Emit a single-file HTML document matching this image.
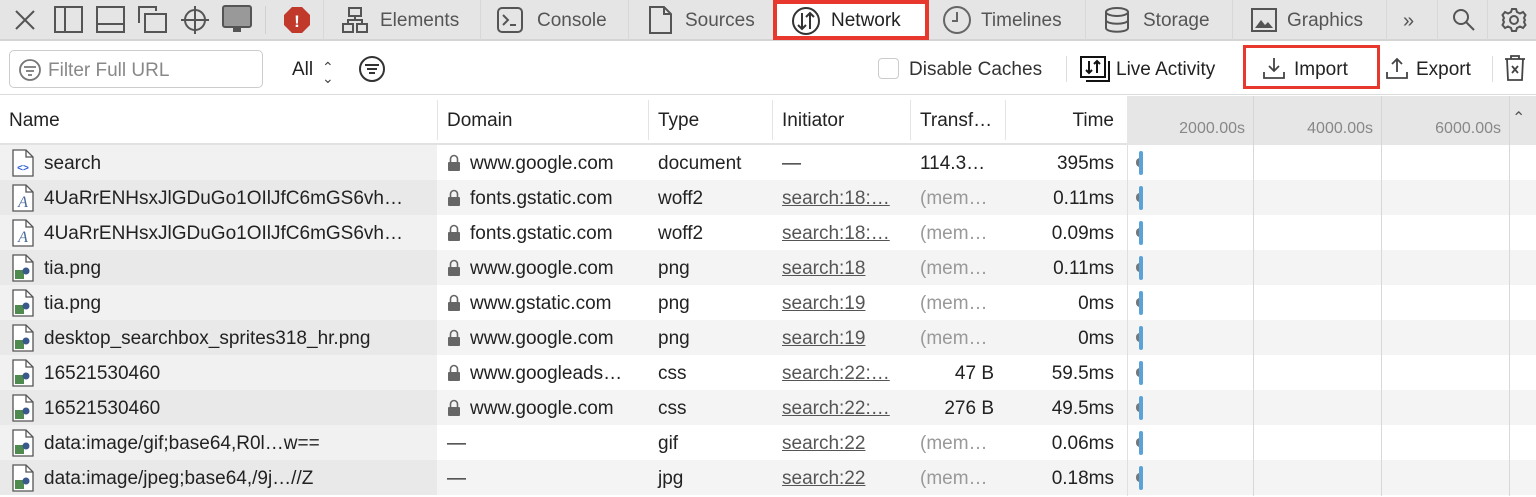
<!DOCTYPE html>
<html><head><meta charset="utf-8"><style>
*{box-sizing:border-box;margin:0;padding:0}
body{width:1536px;height:496px;overflow:hidden;background:#fff;font-family:"Liberation Sans",sans-serif;color:#222;position:relative}
.a{position:absolute}
.tabbar{left:0;top:0;width:1536px;height:41px;background:#e5e5e5;border-bottom:2px solid #d4d4d4}
.tab{position:absolute;top:0;height:40px;font-size:19px;color:#555;line-height:42px;border-left:1px solid #d8d8d8}
.tb{position:absolute;top:43px;height:52px;left:0;width:1536px;background:#fff;border-bottom:1px solid #dcdcdc}
.t{font-size:19px;line-height:37px;white-space:nowrap;position:absolute}
svg{position:absolute}
</style></head><body>
<div class="a tabbar"></div>
<svg style="left:12px;top:7px" width="26" height="26" viewBox="0 0 26 26" stroke="#555" stroke-width="2" fill="none"><path d="M4 4L22 22M22 4L4 22"/></svg>
<svg style="left:54px;top:6px" width="30" height="28" stroke="#555" stroke-width="2" fill="none"><rect x="1" y="1" width="27" height="25"/><path d="M11 1V26"/></svg>
<svg style="left:96px;top:6px" width="30" height="28" stroke="#555" stroke-width="2" fill="none"><rect x="1" y="1" width="27" height="25"/><path d="M1 18H28"/></svg>
<svg style="left:138px;top:6px" width="30" height="28" stroke="#555" stroke-width="2" fill="none"><path d="M1 17V1H18V5"/><rect x="7" y="8" width="21" height="18"/></svg>
<svg style="left:180px;top:5px" width="30" height="30" stroke="#555" stroke-width="2" fill="none"><circle cx="15" cy="15" r="10"/><path d="M15 1V29M1 15H29"/></svg>
<svg style="left:222px;top:5px" width="30" height="30"><rect x="1" y="1" width="28" height="21" rx="2" fill="#999" stroke="#555" stroke-width="2"/><rect x="11" y="23" width="8" height="4" fill="#555"/></svg>
<div class="a" style="left:265px;top:6px;width:1px;height:28px;background:#d0d0d0"></div>
<svg style="left:283px;top:6px" width="28" height="28"><polygon points="9,1 19,1 27,9 27,19 19,27 9,27 1,19 1,9" fill="#c0392b"/><text x="14" y="21" text-anchor="middle" font-size="17" font-weight="bold" fill="#fff" font-family="Liberation Sans">!</text></svg>
<div class="tab" style="left:323px;width:157px"><svg style="left:18px;top:7px" width="26" height="26" stroke="#555" stroke-width="2" fill="none"><rect x="7" y="1" width="12" height="8"/><rect x="1" y="17" width="10" height="8"/><rect x="15" y="17" width="10" height="8"/><path d="M13 9V13H6V17M13 13H20V17"/></svg><span style="position:absolute;left:56px">Elements</span></div>
<div class="tab" style="left:480px;width:148px"><svg style="left:16px;top:7px" width="26" height="26" stroke="#555" stroke-width="2" fill="none"><rect x="1" y="1" width="24" height="24" rx="4"/><path d="M6 8L11 13L6 18M13 18H19"/></svg><span style="position:absolute;left:56px">Console</span></div>
<div class="tab" style="left:628px;width:145px"><svg style="left:20px;top:6px" width="24" height="28" stroke="#555" stroke-width="2" fill="none"><path d="M1 1H15L22 8V27H1Z M15 1V8H22"/></svg><span style="position:absolute;left:56px">Sources</span></div>
<div class="tab" style="left:773px;width:156px;background:#fff;border:4px solid #e8382d;height:40px;line-height:34px;color:#222"><svg style="left:14px;top:2px" width="30" height="30" stroke="#333" stroke-width="2" fill="none"><circle cx="15" cy="15" r="13"/><path d="M11 7V23M7 19L11 23L15 19M19 23V7M15 11L19 7L23 11"/></svg><span style="position:absolute;left:54px">Network</span></div>
<div class="tab" style="left:929px;width:156px;border-left:none"><svg style="left:13px;top:5px" width="30" height="30" stroke="#666" stroke-width="2" fill="none"><circle cx="15" cy="15" r="13"/><path d="M15 7V16H10"/></svg><span style="position:absolute;left:52px">Timelines</span></div>
<div class="tab" style="left:1085px;width:147px"><svg style="left:18px;top:7px" width="26" height="26" stroke="#555" stroke-width="2" fill="none"><ellipse cx="13" cy="5" rx="11" ry="4"/><path d="M2 5V21C2 26 24 26 24 21V5M2 13C2 18 24 18 24 13"/></svg><span style="position:absolute;left:57px">Storage</span></div>
<div class="tab" style="left:1232px;width:154px"><svg style="left:18px;top:8px" width="26" height="24"><rect x="1" y="1" width="24" height="22" fill="none" stroke="#555" stroke-width="2"/><path d="M4 20L10 12L14 17L17 14L22 20Z" fill="#555"/></svg><span style="position:absolute;left:54px">Graphics</span></div>
<div class="tab" style="left:1386px;width:51px"><span style="position:absolute;left:16px;font-size:20px">&#187;</span></div>
<div class="tab" style="left:1437px;width:50px"><svg style="left:14px;top:8px" width="24" height="24" stroke="#555" stroke-width="2" fill="none"><circle cx="9" cy="9" r="7"/><path d="M14 14L22 22"/></svg></div>
<div class="tab" style="left:1487px;width:49px"><svg style="left:13px;top:7px" width="26" height="26" stroke="#555" stroke-width="2" fill="none"><circle cx="13" cy="13" r="4"/><path d="M11 2H15L16 5L19 6.5L22 5L24.5 8L23 11L24 13L23 15L24.5 18L22 21L19 19.5L16 21L15 24H11L10 21L7 19.5L4 21L1.5 18L3 15L2 13L3 11L1.5 8L4 5L7 6.5L10 5Z"/></svg></div>

<div class="tb"></div>
<div class="a" style="left:9px;top:50px;width:254px;height:38px;border:1px solid #ccc;border-radius:5px"></div>
<svg style="left:18px;top:58px" width="24" height="24" stroke="#777" stroke-width="1.8" fill="none"><circle cx="12" cy="12" r="10"/><path d="M6 9H18M8 13H16M10 17H14"/></svg>
<div class="t" style="left:48px;top:52px;color:#888">Filter Full URL</div>
<div class="t" style="left:292px;top:51px">All</div>
<div class="t" style="left:322px;top:49px;font-size:14px;color:#444">&#8963;</div>
<div class="t" style="left:322px;top:60px;font-size:14px;color:#444">&#8964;</div>
<svg style="left:358px;top:55px" width="28" height="28" stroke="#333" stroke-width="2" fill="none"><circle cx="14" cy="14" r="12"/><path d="M7 10H21M9 14H19M11 18H17"/></svg>
<div class="a" style="left:878px;top:58px;width:21px;height:21px;border:1px solid #ccc;border-radius:4px"></div>
<div class="t" style="left:909px;top:51px;color:#333">Disable Caches</div>
<div class="a" style="left:1066px;top:56px;width:1px;height:26px;background:#ddd"></div>
<svg style="left:1080px;top:56px" width="30" height="26" stroke="#111" stroke-width="2" fill="none"><rect x="1" y="1" width="24" height="20"/><path d="M6 25H29V5M9 5V17M6 14L9 17L12 14M17 17V5M14 8L17 5L20 8"/></svg>
<div class="t" style="left:1116px;top:51px">Live Activity</div>
<div class="a" style="left:1243px;top:45px;width:137px;height:44px;border:3px solid #e8382d"></div>
<svg style="left:1263px;top:56px" width="22" height="24" stroke="#444" stroke-width="1.8" fill="none"><path d="M11 2V15M6 10L11 15L16 10M1 16V22H21V16"/></svg>
<div class="t" style="left:1294px;top:51px">Import</div>
<svg style="left:1386px;top:56px" width="22" height="24" stroke="#444" stroke-width="1.8" fill="none"><path d="M11 16V3M6 8L11 3L16 8M1 16V22H21V16"/></svg>
<div class="t" style="left:1416px;top:51px">Export</div>
<div class="a" style="left:1492px;top:56px;width:1px;height:26px;background:#ddd"></div>
<svg style="left:1504px;top:55px" width="22" height="26" stroke="#444" stroke-width="1.8" fill="none"><path d="M1 4H21M7 4V1H15V4M3 4L4 25H18L19 4M8 11L14 18M14 11L8 18"/></svg>

<div class="a" style="left:0;top:96px;width:1536px;height:49px;background:#fff;border-bottom:2px solid #e2e2e2"></div>
<div class="a" style="left:1127px;top:96px;width:409px;height:49px;background:#e6e6e6"></div>
<div class="t" style="left:9px;top:102px">Name</div>
<div class="t" style="left:447px;top:102px">Domain</div>
<div class="t" style="left:658px;top:102px">Type</div>
<div class="t" style="left:782px;top:102px">Initiator</div>
<div class="t" style="left:920px;top:102px">Transf…</div>
<div class="t" style="left:1005px;top:102px;width:109px;text-align:right">Time</div>
<div class="a" style="left:437px;top:100px;width:1px;height:40px;background:#e4e4e4"></div>
<div class="a" style="left:648px;top:100px;width:1px;height:40px;background:#e4e4e4"></div>
<div class="a" style="left:772px;top:100px;width:1px;height:40px;background:#e4e4e4"></div>
<div class="a" style="left:910px;top:100px;width:1px;height:40px;background:#e4e4e4"></div>
<div class="a" style="left:1005px;top:100px;width:1px;height:40px;background:#e4e4e4"></div>
<div class="t" style="left:1140px;top:110px;width:105px;text-align:right;font-size:16px;color:#888">2000.00s</div>
<div class="t" style="left:1268px;top:110px;width:105px;text-align:right;font-size:16px;color:#888">4000.00s</div>
<div class="t" style="left:1396px;top:110px;width:105px;text-align:right;font-size:16px;color:#888">6000.00s</div>
<div class="t" style="left:1512px;top:100px;font-size:16px;color:#555">&#8963;</div>

<div id="rows"></div>
<div class="a" style="left:1253px;top:96px;width:1px;height:400px;background:#d8d8d8"></div>
<div class="a" style="left:1381px;top:96px;width:1px;height:400px;background:#d8d8d8"></div>
<div class="a" style="left:1509px;top:96px;width:1px;height:400px;background:#d8d8d8"></div>
<div class="a" style="left:1127px;top:145px;width:1px;height:351px;background:#e0e0e0"></div>
<script>
var R=[["h","search","www.google.com","document","—","114.3…","395ms"],
["f","4UaRrENHsxJlGDuGo1OIlJfC6mGS6vh…","fonts.gstatic.com","woff2","search:18:…","(mem…","0.11ms"],
["f","4UaRrENHsxJlGDuGo1OIlJfC6mGS6vh…","fonts.gstatic.com","woff2","search:18:…","(mem…","0.09ms"],
["i","tia.png","www.google.com","png","search:18","(mem…","0.11ms"],
["i","tia.png","www.gstatic.com","png","search:19","(mem…","0ms"],
["i","desktop_searchbox_sprites318_hr.png","www.google.com","png","search:19","(mem…","0ms"],
["i","16521530460","www.googleads…","css","search:22:…","47 B","59.5ms"],
["i","16521530460","www.google.com","css","search:22:…","276 B","49.5ms"],
["i","data:image/gif;base64,R0l…w==","—","gif","search:22","(mem…","0.06ms"],
["i","data:image/jpeg;base64,/9j…//Z","—","jpg","search:22","(mem…","0.18ms"]];
var h="";
R.forEach(function(r,i){var y=145+i*35;var alt=i%2==1;
h+='<div class="a" style="left:0;top:'+y+'px;width:1536px;height:35px;background:'+(alt?'#f4f4f4':'#fff')+'"></div>';
h+='<div class="a" style="left:0;top:'+y+'px;width:437px;height:35px;background:'+(alt?'#e9e9e9':'#f1f1f1')+'"></div>';
var ic='<svg style="left:12px;top:'+(y+4)+'px" width="22" height="28"><path d="M1 1H14L21 8V27H1Z" fill="#fff" stroke="#555" stroke-width="1.3"/><path d="M14 1V8H21" fill="none" stroke="#555" stroke-width="1.3"/>';
if(r[0]=="h")ic+='<text x="11" y="22" text-anchor="middle" font-size="10" font-weight="bold" fill="#2b5fd0" font-family="Liberation Sans">&lt;&gt;</text>';
if(r[0]=="f")ic+='<text x="11" y="23" text-anchor="middle" font-size="16" font-style="italic" fill="#4a6a9a" font-family="Liberation Serif">A</text>';
if(r[0]=="i")ic+='<rect x="3" y="16" width="9" height="9" fill="#4f8a4f"/><circle cx="14" cy="17" r="3.5" fill="#3a5a8c"/>';
h+=ic+'</svg>';
var ty=y;
h+='<div class="t" style="left:44px;top:'+ty+'px">'+r[1]+'</div>';
if(r[2]!="—")h+='<svg style="left:447px;top:'+(y+9)+'px" width="14" height="17"><path d="M3.5 8V5A3.5 3.5 0 0 1 10.5 5V8" fill="none" stroke="#666" stroke-width="1.6"/><rect x="1" y="8" width="12" height="9" rx="1" fill="#666"/></svg>';
h+='<div class="t" style="left:'+(r[2]=="—"?447:470)+'px;top:'+ty+'px">'+r[2]+'</div>';
h+='<div class="t" style="left:658px;top:'+ty+'px">'+r[3]+'</div>';
h+='<div class="t" style="left:782px;top:'+ty+'px;'+(i?'color:#555;text-decoration:underline':'')+'">'+r[4]+'</div>';
var gray=r[5].indexOf("mem")>0;
h+='<div class="t" style="'+(gray||i==0?'left:920px;':'left:910px;width:84px;text-align:right;')+'top:'+ty+'px;'+(gray?'color:#999':'')+'">'+r[5]+'</div>';
h+='<div class="t" style="left:1005px;width:109px;text-align:right;top:'+ty+'px">'+r[6]+'</div>';
h+='<div class="a" style="left:1136px;top:'+(y+13)+'px;width:5px;height:9px;border-radius:4px 0 0 4px;background:#777"></div>';
h+='<div class="a" style="left:1139px;top:'+(y+6)+'px;width:4px;height:24px;border-radius:2px;background:#5aa3d8"></div>';
});
document.getElementById("rows").innerHTML=h;
</script>
</body></html>
